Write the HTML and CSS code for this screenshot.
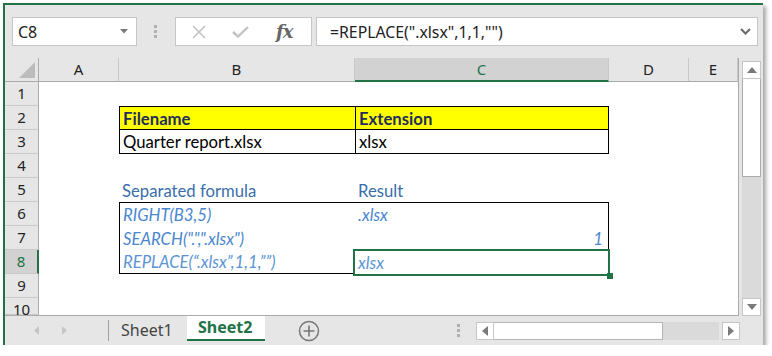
FILE: index.html
```html
<!DOCTYPE html>
<html>
<head>
<meta charset="utf-8">
<link rel="stylesheet" href="styles.css">
</head>
<body>
<div class="window">
  <div class="fbar">
    <div class="namebox"><span>C8</span><svg class="caret" width="8" height="5" viewBox="0 0 8 5"><path d="M0 0H8L4 4.5Z" fill="#7a7a7a"/></svg></div>
    <div class="grip"><i></i><i></i><i></i></div>
    <div class="fbtns">
      <svg class="ico-x" width="16" height="14" viewBox="0 0 16 14"><path d="M2 1L14 13M14 1L2 13" stroke="#c2c2c2" stroke-width="1.6" fill="none"/></svg>
      <svg class="ico-ok" width="17" height="12" viewBox="0 0 17 12"><path d="M1 6L6 10.5L16 1" stroke="#c2c2c2" stroke-width="2.4" fill="none"/></svg>
      <span class="fx">fx</span>
    </div>
    <div class="finput"><span>=REPLACE(".xlsx",1,1,"")</span><svg class="chev" width="11" height="7" viewBox="0 0 11 7"><path d="M1 1L5.5 5.5L10 1" stroke="#6a6a6a" stroke-width="2" fill="none"/></svg></div>
  </div>
  <div class="main">
    <div class="sheet">
      <div class="corner"><svg width="16" height="16" viewBox="0 0 16 16"><path d="M16 0V16H0Z" fill="#bcbcbc"/></svg></div>
      <div class="ch">A</div>
      <div class="ch">B</div>
      <div class="ch ch-sel">C</div>
      <div class="ch">D</div>
      <div class="ch">E</div>

      <div class="rh">1</div><div class="c"></div><div class="c"></div><div class="c"></div><div class="c"></div><div class="c"></div>

      <div class="rh">2</div><div class="c"></div><div class="c hd bt bl bb">Filename</div><div class="c hd bt bl br bb">Extension</div><div class="c"></div><div class="c"></div>

      <div class="rh">3</div><div class="c"></div><div class="c bl bb">Quarter report.xlsx</div><div class="c bl br bb">xlsx</div><div class="c"></div><div class="c"></div>

      <div class="rh">4</div><div class="c"></div><div class="c"></div><div class="c"></div><div class="c"></div><div class="c"></div>

      <div class="rh">5</div><div class="c"></div><div class="c lbl">Separated formula</div><div class="c lbl">Result</div><div class="c"></div><div class="c"></div>

      <div class="rh">6</div><div class="c"></div><div class="c it bt bl">RIGHT(B3,5)</div><div class="c it bt br">.xlsx</div><div class="c"></div><div class="c"></div>

      <div class="rh">7</div><div class="c"></div><div class="c it bl">SEARCH(".",".xlsx")</div><div class="c it br num">1</div><div class="c"></div><div class="c"></div>

      <div class="rh rh-sel">8</div><div class="c"></div><div class="c it it2 bl bb">REPLACE(“.xlsx”,1,1,””)</div><div class="c it it2 sel">xlsx</div><div class="c"></div><div class="c"></div>

      <div class="rh">9</div><div class="c"></div><div class="c"></div><div class="c"></div><div class="c"></div><div class="c"></div>

      <div class="rh">10</div><div class="c"></div><div class="c"></div><div class="c"></div><div class="c"></div><div class="c"></div>
    </div>
    <div class="vscroll">
      <div class="sbtn"><svg width="10" height="6" viewBox="0 0 10 6"><path d="M0 6H10L5 0Z" fill="#7a7a7a"/></svg></div>
      <div class="vthumb"></div>
      <div class="vtrack"></div>
      <div class="sbtn"><svg width="10" height="6" viewBox="0 0 10 6"><path d="M0 0H10L5 6Z" fill="#7a7a7a"/></svg></div>
    </div>
  </div>
  <div class="tabsbar">
    <div class="navs">
      <svg width="5" height="9" viewBox="0 0 5 9"><path d="M5 0V9L0 4.5Z" fill="#c6c6c6"/></svg>
      <svg width="5" height="9" viewBox="0 0 5 9"><path d="M0 0V9L5 4.5Z" fill="#c6c6c6"/></svg>
    </div>
    <div class="tsep"></div>
    <div class="tab">Sheet1</div>
    <div class="tab tab-on">Sheet2</div>
    <div class="add"><svg width="22" height="22" viewBox="0 0 22 22"><circle cx="11" cy="11" r="9.5" stroke="#777" stroke-width="1.5" fill="none"/><path d="M11 5.5V16.5M5.5 11H16.5" stroke="#777" stroke-width="1.6"/></svg></div>
    <div class="grip2"><i></i><i></i><i></i></div>
    <div class="hscroll">
      <div class="hbtn"><svg width="6" height="10" viewBox="0 0 6 10"><path d="M6 0V10L0 5Z" fill="#7a7a7a"/></svg></div>
      <div class="hthumb"></div>
      <div class="htrack"></div>
      <div class="hbtn hbtn-r"><svg width="6" height="10" viewBox="0 0 6 10"><path d="M0 0V10L6 5Z" fill="#7a7a7a"/></svg></div>
    </div>
  </div>
</div>
</body>
</html>
```

FILE: styles.css
```css
html, body {
  margin: 0;
  padding: 0;
  background: #ffffff;
}
body {
  font-family: "Noto Sans", "Open Sans", sans-serif;
}
.window {
  margin: 3px 0 0 3px;
  width: 760px;
  height: 342px;
  box-sizing: border-box;
  border-top: 2px solid #217346;
  border-left: 2px solid #217346;
  background: #e6e6e6;
  box-shadow: 3px 3px 4px rgba(0, 0, 0, 0.35);
  display: flex;
  flex-direction: column;
}

/* formula bar */
.fbar {
  height: 53px;
  display: flex;
  align-items: center;
  flex: none;
}
.namebox {
  margin-left: 7px;
  width: 125px;
  height: 29px;
  box-sizing: border-box;
  border: 1px solid #c6c6c6;
  background: #fff;
  display: flex;
  align-items: center;
  justify-content: space-between;
  padding: 0 8px 0 5px;
  font-size: 16px;
  color: #222;
}
.grip {
  margin-left: 17px;
  width: 4px;
  display: flex;
  flex-direction: column;
  gap: 2px;
}
.grip i, .grip2 i {
  display: block;
  width: 3px;
  height: 3px;
  background: #b0b0b0;
}
.fbtns {
  margin-left: 17px;
  width: 137px;
  height: 29px;
  box-sizing: border-box;
  border: 1px solid #c6c6c6;
  background: #fff;
  display: flex;
  align-items: center;
  padding-left: 15px;
}
.ico-ok {
  margin-left: 25px;
}
.fx {
  margin-left: 27px;
  font-family: "DejaVu Serif", "Liberation Serif", serif;
  font-style: italic;
  font-weight: bold;
  font-size: 18px;
  color: #666;
  letter-spacing: -1px;
}
.finput {
  margin-left: 4px;
  width: 442px;
  height: 29px;
  box-sizing: border-box;
  border: 1px solid #c6c6c6;
  background: #fff;
  display: flex;
  align-items: center;
  justify-content: space-between;
  padding: 0 6px 0 13px;
  font-size: 15.8px;
  color: #222;
}

/* sheet */
.main {
  height: 258px;
  display: flex;
  flex: none;
}
.sheet {
  width: 734px;
  box-sizing: border-box;
  border-right: 1px solid #ababab;
  border-bottom: 1px solid #ababab;
  display: grid;
  grid-template-columns: 34px 80px 236px 254px 80px 49px;
  grid-template-rows: 24px repeat(9, 24px) 17px;
  overflow: hidden;
}
.corner {
  box-sizing: border-box;
  border-right: 1px solid #ababab;
  border-bottom: 1px solid #ababab;
  display: flex;
  align-items: flex-end;
  justify-content: flex-end;
  padding: 0 3px 3px 0;
}
.ch {
  box-sizing: border-box;
  border-right: 1px solid #c8c8c8;
  border-bottom: 1px solid #ababab;
  text-align: center;
  font-size: 15px;
  line-height: 23px;
  color: #222;
}
.ch:last-of-type {
  border-right: none;
  text-align: right;
  padding-right: 8px;
}
.ch-sel {
  background: #d2d2d2;
  color: #217346;
  border-bottom: 2px solid #217346;
}
.rh {
  box-sizing: border-box;
  border-right: 1px solid #ababab;
  border-bottom: 1px solid #c8c8c8;
  text-align: center;
  font-size: 15px;
  line-height: 23px;
  color: #222;
}
.rh-sel {
  background: #d2d2d2;
  color: #217346;
  border-right: 2px solid #217346;
}
.c {
  background: #fff;
  box-sizing: border-box;
  font-family: Lato, "Open Sans", sans-serif;
  font-size: 16.7px;
  line-height: 24px;
  padding-left: 3px;
  padding-top: 1px;
  white-space: nowrap;
  color: #000;
}
.hd {
  background: #ffff00;
  font-weight: bold;
  color: #1f2d5c;
}
.lbl {
  color: #3a6eab;
}
.it {
  font-style: italic;
  color: #4a87cf;
}
.it2 {
  color: #5b95d6;
}
.num {
  text-align: right;
  padding-right: 5px;
}
.bt { border-top: 1px solid #000; line-height: 23px; }
.bb { border-bottom: 1px solid #000; line-height: 23px; }
.bt.bb { line-height: 22px; }
.bl { border-left: 1px solid #000; }
.br { border-right: 1px solid #000; }
.sel {
  position: relative;
}
.sel::after {
  content: "";
  position: absolute;
  left: -2px;
  top: -1px;
  right: -1px;
  bottom: -2px;
  border: 2px solid #217346;
}
.sel::before {
  content: "";
  position: absolute;
  right: -4px;
  bottom: -5px;
  width: 6px;
  height: 6px;
  background: #217346;
  z-index: 2;
}

/* vertical scrollbar */
.vscroll {
  margin-left: 3px;
  margin-top: 3px;
  width: 19px;
  height: 255px;
  display: flex;
  flex-direction: column;
}
.sbtn {
  height: 18px;
  box-sizing: border-box;
  border: 1px solid #c6c6c6;
  background: #fff;
  display: flex;
  align-items: center;
  justify-content: center;
  flex: none;
}
.vthumb {
  height: 98px;
  box-sizing: border-box;
  border: 1px solid #ababab;
  border-top: none;
  background: #fff;
  flex: none;
}
.vtrack {
  flex: 1;
  background: #dadada;
}

/* tabs */
.tabsbar {
  height: 29px;
  display: flex;
  align-items: center;
  flex: none;
  font-size: 16px;
}
.navs {
  width: 103px;
  display: flex;
  align-items: center;
  padding-left: 29px;
  box-sizing: border-box;
  gap: 23px;
}
.tsep {
  width: 1px;
  height: 21px;
  background: #a0a0a0;
}
.tab {
  width: 78px;
  height: 29px;
  box-sizing: border-box;
  line-height: 28px;
  padding-left: 12px;
  color: #444;
}
.tab-on {
  height: 25px;
  align-self: flex-start;
  background: #fff;
  border-bottom: 2px solid #217346;
  color: #217346;
  font-weight: bold;
  line-height: 23px;
  padding-left: 11px;
}
.add {
  margin-left: 33px;
  width: 22px;
  height: 22px;
}
.grip2 {
  margin-left: 137px;
  display: flex;
  flex-direction: column;
  gap: 2px;
}
.hscroll {
  margin-left: 16px;
  height: 18px;
  display: flex;
}
.hbtn {
  width: 18px;
  box-sizing: border-box;
  border: 1px solid #c6c6c6;
  background: #fff;
  display: flex;
  align-items: center;
  justify-content: center;
}
.hbtn-r {
  margin-left: 3px;
}
.hthumb {
  width: 169px;
  box-sizing: border-box;
  border: 1px solid #b4b4b4;
  border-left: none;
  background: #fff;
}
.htrack {
  width: 56px;
  background: #dadada;
}
```
